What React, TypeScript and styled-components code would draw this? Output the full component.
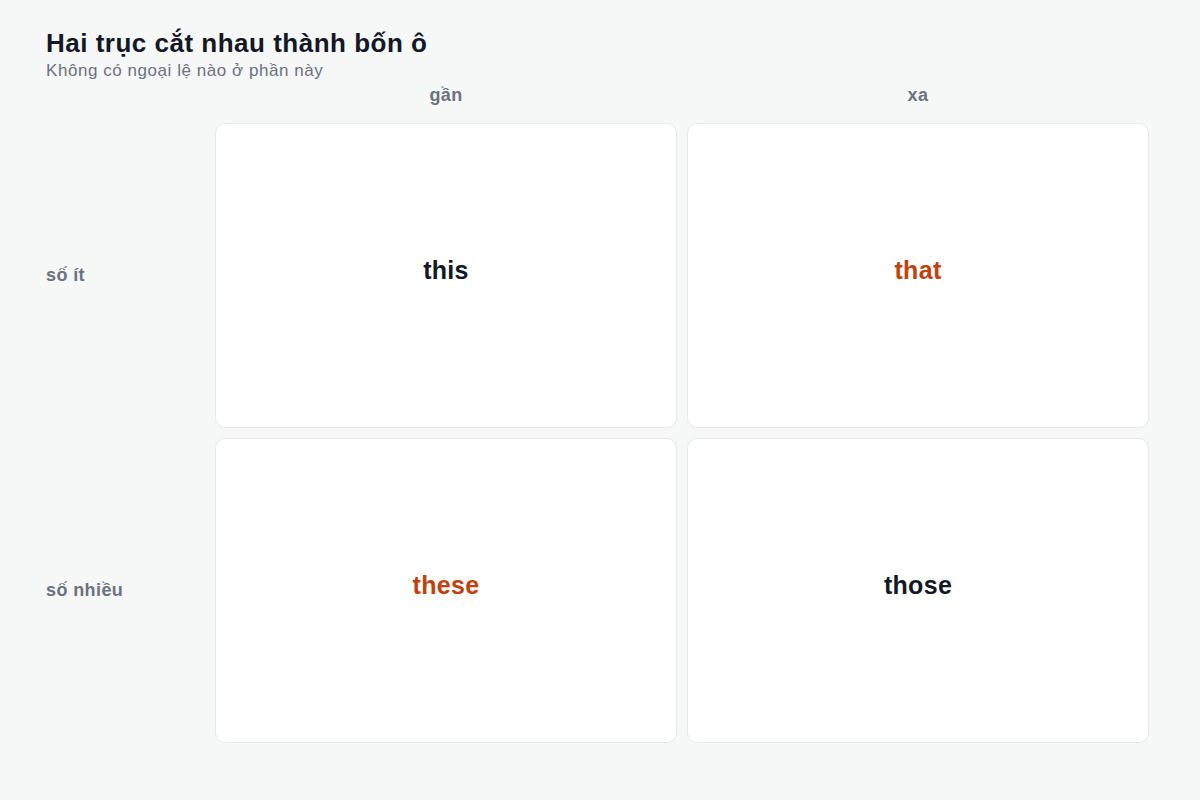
import React from "react";
import styled, { createGlobalStyle } from "styled-components";

const GlobalStyle = createGlobalStyle`
  html, body {
    margin: 0;
    padding: 0;
    background: #f6f7f7;
    font-family: "Liberation Sans", Arial, Helvetica, sans-serif;
  }
  * { box-sizing: border-box; }
`;

const Page = styled.div`
  width: 1200px;
  height: 800px;
  padding: 28px 51px 0 46px;
  background: #f6f7f7;
`;

const Title = styled.h1`
  margin: 0;
  font-size: 26px;
  line-height: 30px;
  font-weight: 700;
  letter-spacing: 0.5px;
  color: #111827;
`;

const Subtitle = styled.p`
  margin: 3px 0 0;
  font-size: 17px;
  line-height: 20px;
  letter-spacing: 0.55px;
  color: #6b7280;
`;

const Grid = styled.div`
  display: grid;
  grid-template-columns: 159px 1fr 1fr;
  grid-template-rows: 32px 305px 305px;
  gap: 10px;
`;

const ColHead = styled.div`
  display: flex;
  align-items: center;
  justify-content: center;
  padding-bottom: 4px;
  font-size: 18px;
  font-weight: 700;
  letter-spacing: 0.4px;
  color: #6b7280;
`;

const RowHead = styled.div`
  display: flex;
  align-items: center;
  font-size: 18px;
  font-weight: 700;
  letter-spacing: 0.4px;
  color: #6b7280;
`;

const Cell = styled.div<{ $accent?: boolean }>`
  display: flex;
  align-items: center;
  justify-content: center;
  padding-bottom: 10px;
  background: #ffffff;
  border: 1px solid #e5e7eb;
  border-radius: 10px;
  font-size: 25px;
  font-weight: 700;
  letter-spacing: 0.3px;
  color: ${(p) => (p.$accent ? "#c2410c" : "#111827")};
`;

export default function App() {
  return (
    <>
      <GlobalStyle />
      <Page>
        <Title>Hai trục cắt nhau thành bốn ô</Title>
        <Subtitle>Không có ngoại lệ nào ở phần này</Subtitle>
        <Grid>
          <div />
          <ColHead>gần</ColHead>
          <ColHead>xa</ColHead>
          <RowHead>số ít</RowHead>
          <Cell>this</Cell>
          <Cell $accent>that</Cell>
          <RowHead>số nhiều</RowHead>
          <Cell $accent>these</Cell>
          <Cell>those</Cell>
        </Grid>
      </Page>
    </>
  );
}
